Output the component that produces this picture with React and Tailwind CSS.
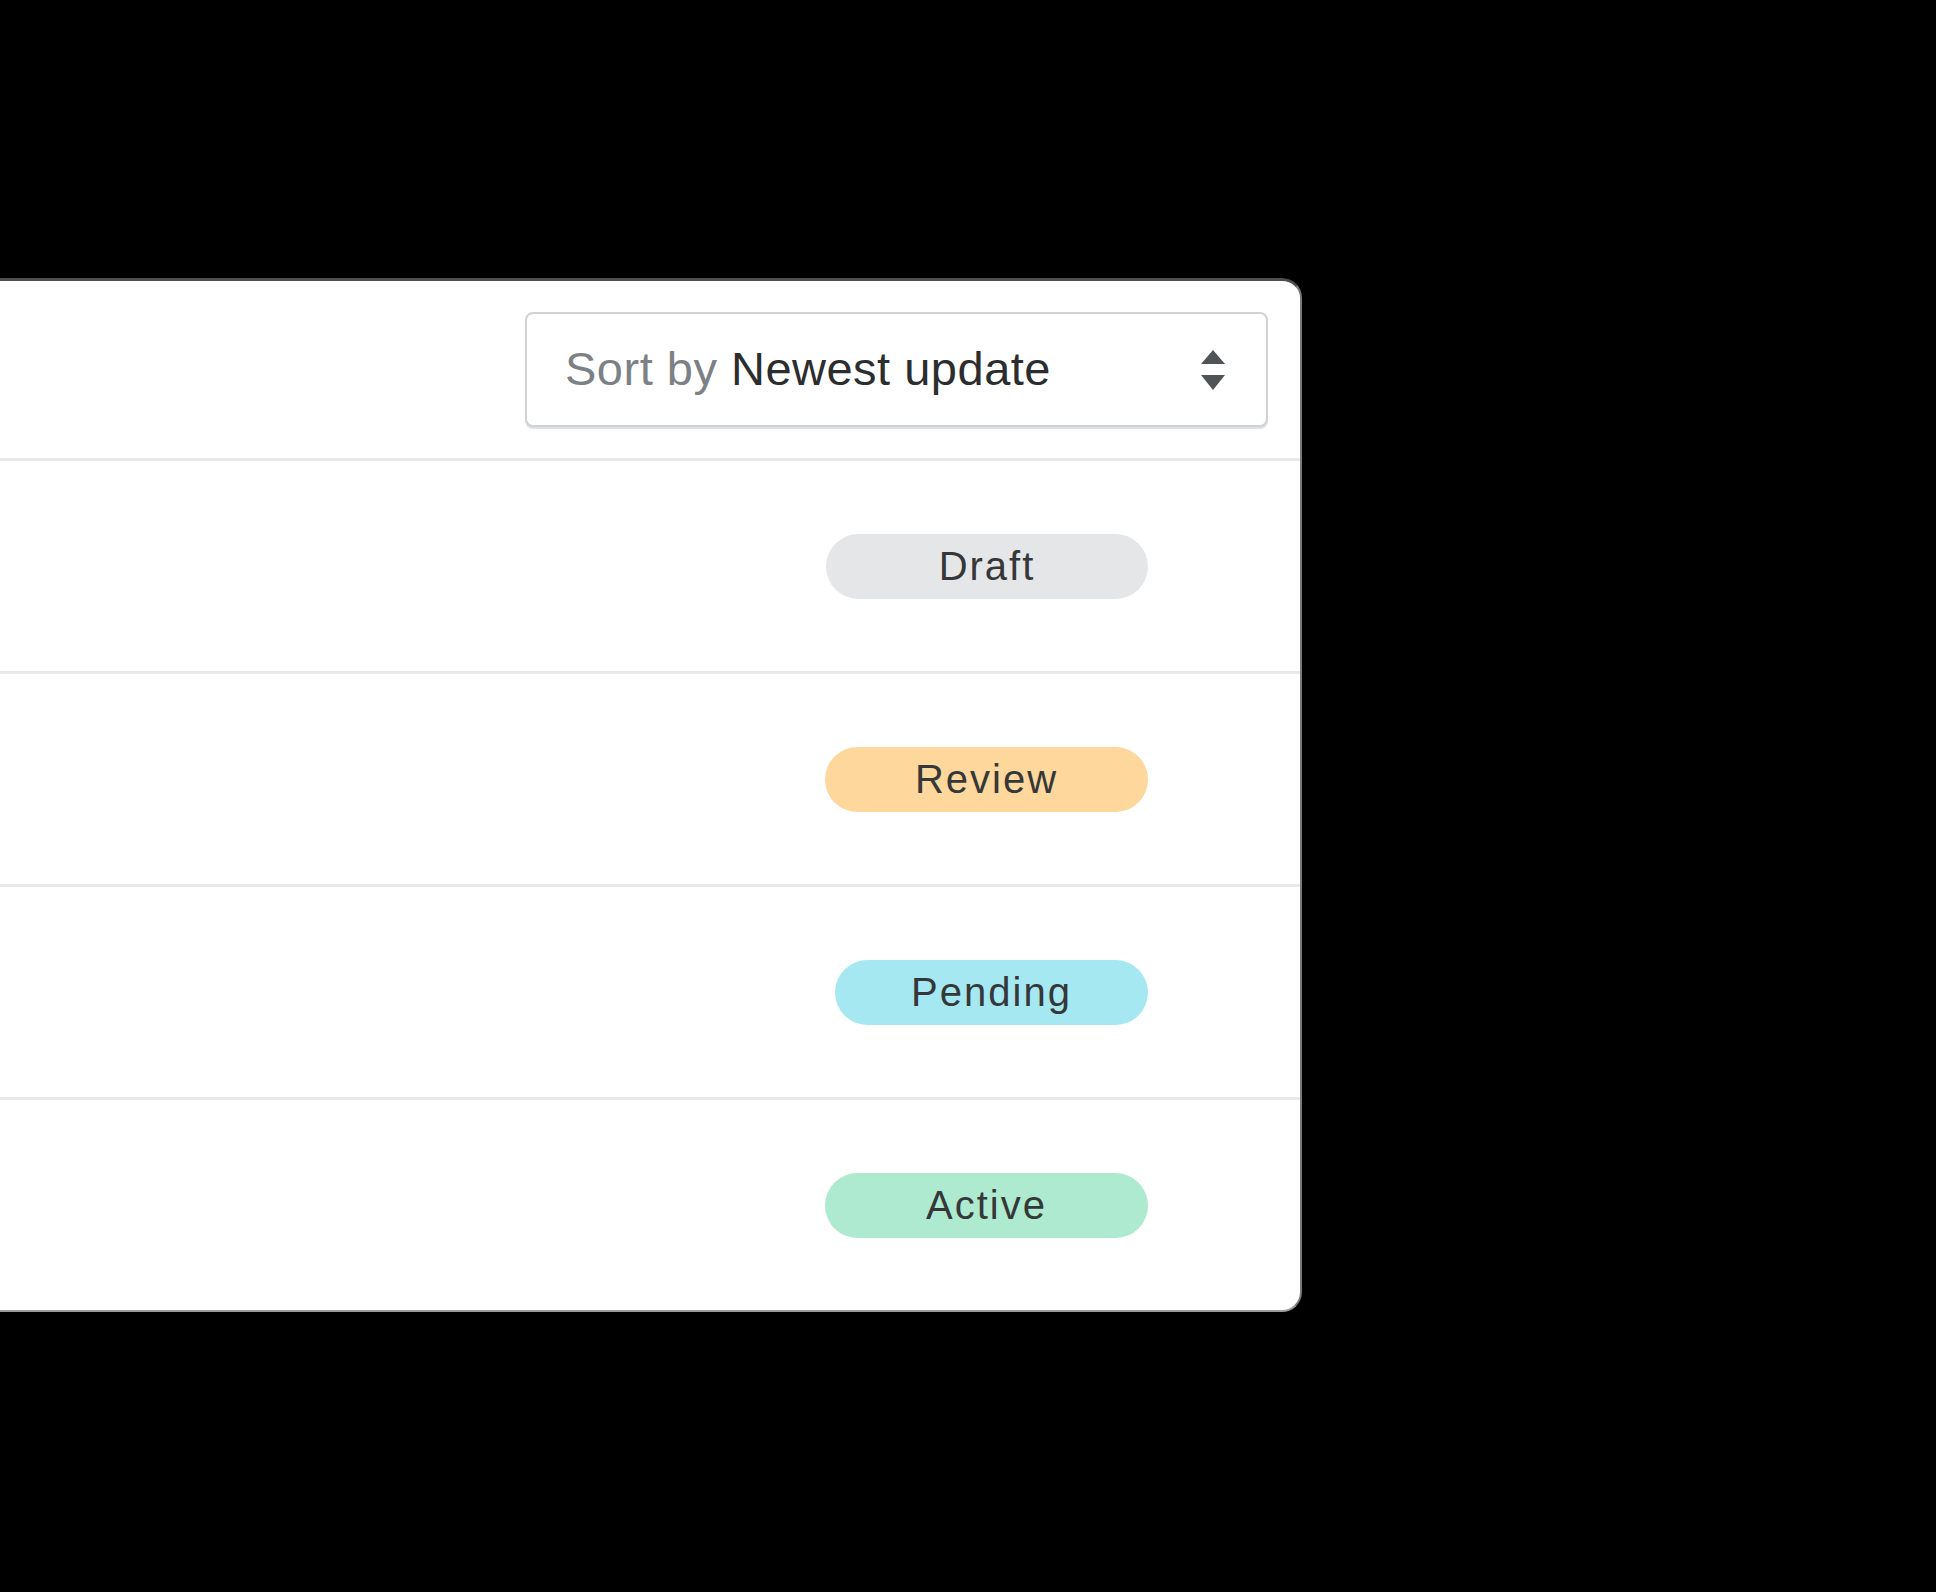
import { useState } from "react";

const statuses = [
  { label: "Draft", className: "w-[322px] bg-[#e4e6e8]" },
  { label: "Review", className: "w-[323px] bg-[#fdd79b]" },
  { label: "Pending", className: "w-[313px] bg-[#a5e8f1]" },
  { label: "Active", className: "w-[323px] bg-[#aeeacf]" },
];

function SortSelect() {
  const [sort] = useState("Newest update");

  return (
    <button
      type="button"
      className="flex h-[115px] w-[743px] items-center justify-between rounded-[8px] border-2 border-[#cfd3d5] bg-white pl-[38px] pr-[40px] shadow-[0_2px_0_#dfe2e4]"
    >
      <span className="text-[47px] tracking-[0.5px]">
        <span className="text-[#7c8185]">Sort by </span>
        <span className="text-[#2b2d2f]">{sort}</span>
      </span>
      <svg width="26" height="42" viewBox="0 0 26 42" className="text-[#505456]">
        <path d="M13 1 L25 15 L1 15 Z" fill="currentColor" />
        <path d="M1 26 L25 26 L13 41 Z" fill="currentColor" />
      </svg>
    </button>
  );
}

export default function App() {
  return (
    <div
      className="min-h-screen bg-black pt-[278px]"
      style={{ fontFamily: '"Liberation Sans", Arial, sans-serif' }}
    >
      <div className="w-[1302px] overflow-hidden rounded-r-[20px] border-t-[3px] border-r-2 border-b-2 border-t-[#4e4e4e] border-r-[#7a7a7a] border-b-[#9c9c9c] bg-white">
        <div className="flex h-[180px] items-center justify-end border-b-[3px] border-[#e8e9eb] pr-[32px]">
          <SortSelect />
        </div>

        {statuses.map((status, i) => (
          <div
            key={status.label}
            className={
              i < statuses.length - 1
                ? "flex h-[213px] items-center justify-end border-b-[3px] border-[#e8e9eb] pr-[152px]"
                : "flex h-[210px] items-center justify-end pr-[152px]"
            }
          >
            <span
              className={`flex h-[65px] items-center justify-center rounded-full text-[40px] tracking-[2px] text-[#353738] ${status.className}`}
            >
              {status.label}
            </span>
          </div>
        ))}
      </div>
    </div>
  );
}
